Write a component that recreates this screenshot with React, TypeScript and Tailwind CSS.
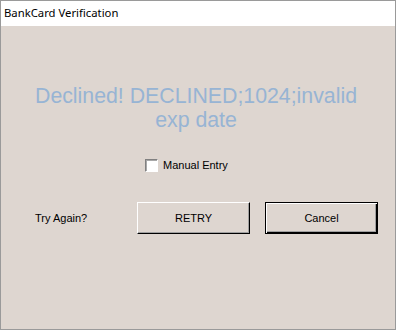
export default function App() {
  return (
    <div className="w-[396px] h-[330px] flex flex-col border border-[#9a9a9a] bg-[#ded6d0] font-['Liberation_Sans',Arial,sans-serif]">
      <div className="h-[25px] shrink-0 bg-white flex items-center pl-[3px] text-[11.3px] text-black font-['Noto_Sans',sans-serif]">
        BankCard Verification
      </div>

      <div className="flex flex-col">
        <div className="mt-[58px] ml-[27px] w-[336px] text-center text-[21.3px] leading-[24px] text-[#97b4d4]">
          Declined! DECLINED;1024;invalid exp date
        </div>

        <label className="mt-[27px] ml-[144px] flex items-center gap-[5px] text-[11px] leading-[13px] text-black">
          <span className="w-[13px] h-[13px] bg-white border border-t-[#808080] border-l-[#808080] border-r-white border-b-white shadow-[inset_1px_1px_0_#a8a8a8]" />
          Manual Entry
        </label>

        <div className="mt-[30px] flex items-center text-[11px] text-black">
          <span className="w-[136px] pl-[34px]">Try Again?</span>
          <button className="w-[113px] h-[32px] bg-[#ded6d0] border border-t-white border-l-white border-r-black border-b-black shadow-[inset_-1px_-1px_0_#a0a0a0]">
            RETRY
          </button>
          <button className="ml-[15px] w-[113px] h-[32px] bg-[#ded6d0] border border-black shadow-[inset_1px_1px_0_#fff,inset_-1px_-1px_0_#000,inset_-2px_-2px_0_#a0a0a0]">
            Cancel
          </button>
        </div>
      </div>
    </div>
  );
}
